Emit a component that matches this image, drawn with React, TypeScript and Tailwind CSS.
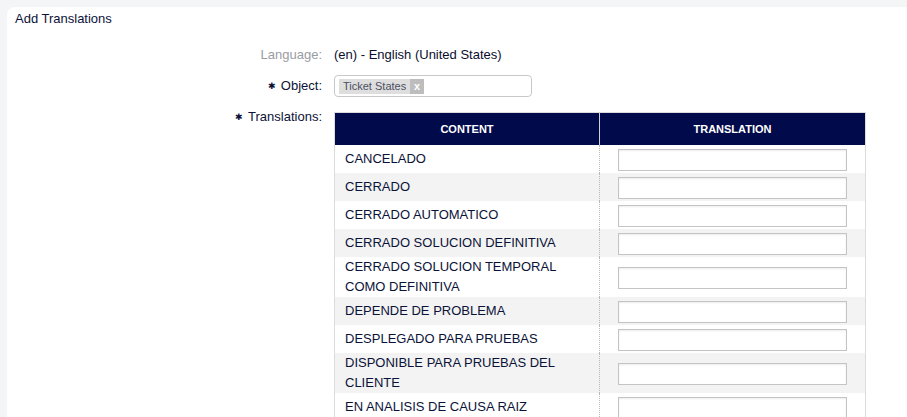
import React from "react";

const rows = [
  "CANCELADO",
  "CERRADO",
  "CERRADO AUTOMATICO",
  "CERRADO SOLUCION DEFINITIVA",
  "CERRADO SOLUCION TEMPORAL COMO DEFINITIVA",
  "DEPENDE DE PROBLEMA",
  "DESPLEGADO PARA PRUEBAS",
  "DISPONIBLE PARA PRUEBAS DEL CLIENTE",
  "EN ANALISIS DE CAUSA RAIZ",
  "EN ESPERA",
];

function Star() {
  return <span className="mr-[5px] inline-block align-middle text-[9px] leading-none text-[#0b1035]">✱</span>;
}

export default function App() {
  return (
    <div
      className="h-[417px] w-[907px] overflow-hidden bg-[#f4f5f7] pl-[7px] pt-[7px] text-[#0b1238]"
      style={{ fontFamily: '"Liberation Sans", Arial, sans-serif' }}
    >
      <div className="h-[600px] w-[920px] rounded-tl-[8px] bg-white">
        <div className="px-[8px] pt-[2px] text-[13px] leading-[20px]">Add Translations</div>
        <div className="mt-[16px] flex flex-col">
          <div className="flex h-[20px] items-center">
            <div className="w-[315px] text-right text-[13px] text-[#9a9ca3]">Language:</div>
            <div className="ml-[12px] text-[13px] text-[#0a0e2c]">(en) - English (United States)</div>
          </div>
          <div className="mt-[10px] flex items-center">
            <div className="w-[315px] text-right text-[13px]">
              <Star />
              Object:
            </div>
            <div className="ml-[12px] flex h-[22px] w-[198px] items-center rounded-[4px] border border-[#c8c8c8] px-[4px]">
              <div className="flex h-[15px] items-stretch bg-[#dedede] text-[11px] leading-[15px] text-[#4a4f63]">
                <span className="px-[4px]">Ticket States</span>
                <span className="flex w-[14px] items-center justify-center bg-[#bdbdbd] text-[11px] font-bold leading-none text-white">
                  x
                </span>
              </div>
            </div>
          </div>
          <div className="mt-[15px] flex items-start">
            <div className="-mt-[3px] w-[315px] text-right text-[13px] leading-[16px]">
              <Star />
              Translations:
            </div>
            <table className="ml-[12px] w-[532px] border-collapse border border-[#dcdcdc] text-[13px]">
              <thead>
                <tr className="h-[32px] bg-[#010a4a] text-white">
                  <th className="w-[265px] border-r border-[#d0d0d0] text-center text-[11px] font-bold">CONTENT</th>
                  <th className="text-center text-[11px] font-bold">TRANSLATION</th>
                </tr>
              </thead>
              <tbody>
                {rows.map((r, i) => (
                  <tr key={r} className={i % 2 === 1 ? "bg-[#f3f3f3]" : "bg-white"}>
                    <td className="border-r border-dotted border-[#b8b8b8] px-[10px] py-0 align-middle leading-[20px]">
                      {r}
                    </td>
                    <td className="px-[18px] pb-[2px] pt-[4px] align-middle">
                      <div className="h-[22px] w-[229px] border border-[#c4c4c4] bg-white shadow-[inset_0_1px_2px_rgba(0,0,0,0.08)]" />
                    </td>
                  </tr>
                ))}
              </tbody>
            </table>
          </div>
        </div>
      </div>
    </div>
  );
}
